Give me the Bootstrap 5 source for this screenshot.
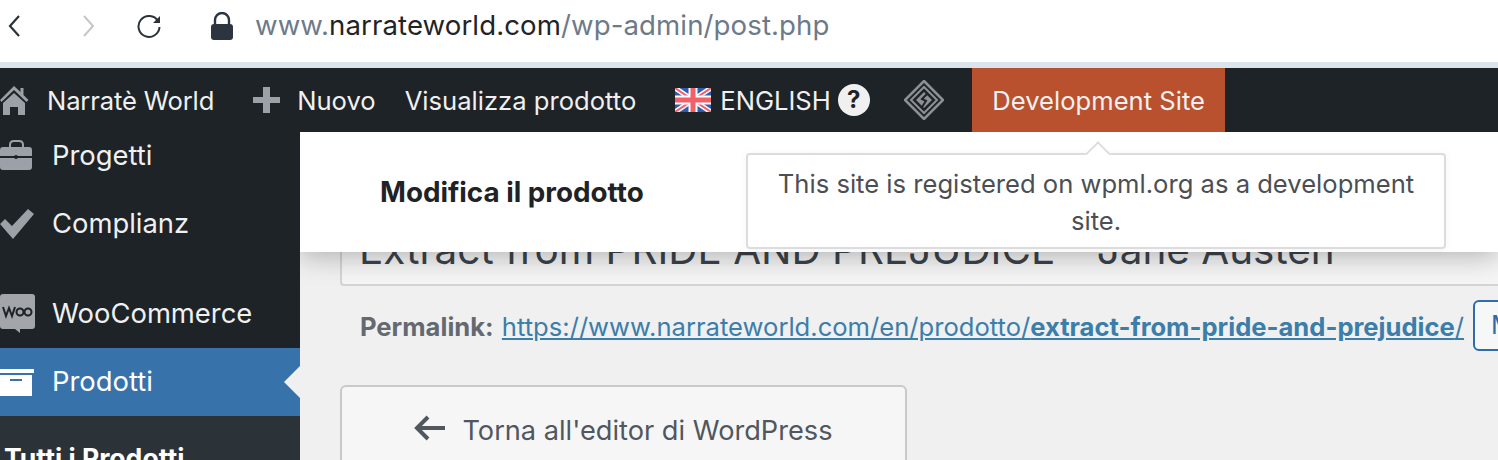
<!doctype html>
<html lang="it"><head><meta charset="utf-8"><title>Modifica il prodotto</title>
<link href="https://cdn.jsdelivr.net/npm/bootstrap@5.3.0/dist/css/bootstrap.min.css" rel="stylesheet">
<style>
html,body{height:460px;overflow:hidden;background:#f0f0f1}
body{font-family:Inter,"Liberation Sans",sans-serif;font-size:25.6px;position:relative}
.chrome{height:62px;background:#fff;padding-bottom:10px}
.urltext{font-size:27.6px;color:#6c7a89;line-height:1;letter-spacing:.1px}
.urltext b{font-weight:400;color:#1f2428}
.strip{height:6px;background:#dae4ec}
.adminbar{height:64px;background:#1d2327;color:#f0f0f1;white-space:nowrap}
.adminbar span.lbl{line-height:67px}
.adminbar span.sitename{letter-spacing:-.15px}
.devsite{background:#b9512e;height:64px;padding:0 20.5px;line-height:66px;color:#f0f0f1}
.qmark{width:32px;height:32px;margin-left:7px;border-radius:50%;background:#f0f0f1;color:#1d2327;font-weight:700;font-size:24px;line-height:32px;text-align:center}
.workarea{height:328px}
.sidemenu{width:300px;background:#1d2327;color:#f0f0f1;flex:none;position:relative;overflow:hidden;font-size:27.4px}
.menuitem{height:68px;flex:none;white-space:nowrap}
.menuitem svg{flex:none}
.menuitem .lbl{margin-left:52px}
.menuicon{position:absolute;left:0}
.firstitem{height:48px;margin-bottom:10px}
.gap22{height:22px;flex:none}
.activeitem{background:#3872ab;color:#fff;position:relative}
.activeitem::after{content:"";position:absolute;right:0;top:50%;margin-top:-16px;border:16px solid transparent;border-left:0;border-right-color:#f0f0f1}
.subitem{background:#2c3338;color:#fff;font-weight:700;flex:none;height:60px;padding:27px 0 0 4px;line-height:30px;font-size:26.6px}
.mainarea{flex:1;min-width:0;position:relative;overflow:hidden;background:#f0f0f1}
.editheader{height:120px;background:#fff;position:relative;z-index:2;box-shadow:0 4px 26px rgba(0,0,0,.28);padding-left:80px;line-height:120px;font-size:27.8px;font-weight:700;color:#1d2327}
.titlebox{margin:-34px -60px 0 40px;height:68px;border:2px solid #d3d4d6;border-radius:4px;background:#f5f5f6;font-size:40.45px;color:#3c434a;padding-left:17px;line-height:60px;white-space:nowrap;position:relative;z-index:1}
.permarow{margin:21px 0 0 60px;white-space:nowrap;height:38px;line-height:34px;color:#646970}
.permarow a{color:#3b7eaa;text-decoration:underline}
.permarow .plabel{font-weight:700;color:#646970;margin-right:1px}
.modbtn{display:inline-block;width:60px;height:51px;border:2px solid #2f6ca8;border-radius:6px;background:#f6f7f7;color:#2f6ca8;line-height:46px;padding-left:16px;vertical-align:middle;margin:-7px 0 0 9px}
.backbtn{margin:40px 0 0 40px;width:567px;height:120px;border:2px solid #c8c9cb;border-radius:6px;background:#f6f6f7;color:#50575e;padding-top:24px;font-size:27.2px}
.devpop{position:absolute;left:746px;top:153px;width:700px;height:96px;background:#fff;border:2px solid #dcdcde;border-radius:4px;z-index:5;color:#4b4f54;text-align:center;padding:11px 20px;line-height:36.5px;font-size:25.6px;box-shadow:0 1px 8px rgba(0,0,0,.05)}
.devpop::before{content:"";position:absolute;left:340px;top:-11px;width:20px;height:20px;background:#fff;border-left:2px solid #dcdcde;border-top:2px solid #dcdcde;transform:rotate(45deg) scale(.9);}
</style></head><body>
<div class="chrome d-flex align-items-center">
 <svg class="ms-2" width="14" height="24" viewBox="0 0 14 24" fill="none" stroke="#2b323a" stroke-width="2.2"><path d="M11 2 2 12l9 10"/></svg>
 <svg style="margin-left:59px" width="14" height="24" viewBox="0 0 14 24" fill="none" stroke="#c4c6c8" stroke-width="2"><path d="M3 2l9 10-9 10"/></svg>
 <svg style="margin-left:41px" width="26" height="26" viewBox="0 0 26 26" fill="none" stroke="#2b323a" stroke-width="2"><path d="M22 8A10.500 10.500 0 1 0 23.500 14"/><path d="M24 3v7h-7" fill="#2b323a" stroke="none"/></svg>
 <svg style="margin-left:48px" width="24" height="28" viewBox="0 0 24 28"><path d="M5 13V8a7 7 0 0 1 14 0v5" fill="none" stroke="#2c3440" stroke-width="2.400"/><rect x="1" y="12" width="22" height="16" rx="3" fill="#2c3440"/></svg>
 <div class="urltext" style="margin-left:21px">www.<b>narrateworld.com</b>/wp-admin/post.php</div>
</div>
<div class="strip"></div>
<div class="adminbar d-flex align-items-center">
 <svg width="29" height="32" viewBox="0 0 29 32"><path d="M14 2 0 16l1.500 2L14 6l12.500 12 2-2-5-5V4h-3v4z" fill="#9ca1a7"/><path d="M3 19 14 9l11 10v12h-7v-8h-8v8H3z" fill="#9ca1a7"/></svg>
 <span class="lbl sitename" style="margin-left:18px">Narratè World</span>
 <svg style="margin-left:39px" width="27" height="26" viewBox="0 0 27 26"><path d="M10 0h7v10h10v6H17v10h-7V16H0v-6h10z" fill="#9ca1a7"/></svg>
 <span class="lbl" style="margin-left:17px">Nuovo</span>
 <span class="lbl" style="margin-left:29px">Visualizza prodotto</span>
 <svg style="margin-left:39px" width="36" height="24" viewBox="0 0 36 24"><rect width="36" height="24" fill="#2d5cb0"/><path d="M0 0l36 24M36 0 0 24" stroke="#fff" stroke-width="5"/><path d="M0 0l36 24M36 0 0 24" stroke="#f4606a" stroke-width="2"/><path d="M18 0v24M0 12h36" stroke="#fff" stroke-width="9"/><path d="M18 0v24M0 12h36" stroke="#f4606a" stroke-width="5"/></svg>
 <span class="lbl" style="margin-left:9px">ENGLISH</span>
 <span class="qmark">?</span>
 <svg style="margin-left:34px" width="40" height="40" viewBox="0 0 40 40" fill="none" stroke="#8d9196"><path d="M20 1 39 20 20 39 1 20z" stroke-width="2.500"/><path d="M20 7 33 20 20 33 7 20z" stroke-width="2"/><path d="M20 12 28 20 20 28 12 20z" fill="#8d9196" stroke="none"/><path d="M23 14l-5 5 4 2-4 6" stroke="#1d2327" stroke-width="2"/></svg>
 <div class="devsite" style="margin-left:28px">Development Site</div>
</div>
<div class="workarea d-flex">
 <div class="sidemenu d-flex flex-column">
  <div class="menuitem firstitem d-flex align-items-center"><svg class="menuicon" width="33" height="32" viewBox="0 0 33 32"><path d="M10 7V5q0-4 4-4h5q4 0 4 4v2" fill="none" stroke="#9ca1a7" stroke-width="2"/><path d="M0 10q0-3 3-3h26q3 0 3 3v6H0zM0 18h32v9q0 3-3 3H3q-3 0-3-3z" fill="#9ca1a7"/><circle cx="16" cy="17" r="2" fill="#1d2327"/></svg><span class="lbl">Progetti</span></div>
  <div class="menuitem d-flex align-items-center"><svg class="menuicon" width="34" height="30" viewBox="0 0 34 30"><path d="M0 15l5-5 7 7L28 0l6 5-21 25z" fill="#9ca1a7"/></svg><span class="lbl">Complianz</span></div>
  <div class="gap22"></div>
  <div class="menuitem d-flex align-items-center"><svg class="menuicon" width="36" height="40" viewBox="0 0 36 40"><path d="M3 0h29q3 0 3 3v29q0 3-3 3H20v4l-5-4H3q-3 0-3-3V3q0-3 3-3z" fill="#a2a5a9"/><path d="M3 13l3 9 3-8 3 8 3-9" fill="none" stroke="#1d2327" stroke-width="2"/><circle cx="20" cy="18" r="3.500" fill="none" stroke="#1d2327" stroke-width="2"/><circle cx="28" cy="18" r="3.500" fill="none" stroke="#1d2327" stroke-width="2"/></svg><span class="lbl">WooCommerce</span></div>
  <div class="menuitem activeitem d-flex align-items-center"><svg class="menuicon" width="34" height="27" viewBox="0 0 34 27"><path d="M0 0h34v4H0zM0 6h32v21H0z" fill="#fff"/><path d="M10 10h12v2H10z" fill="#3872ab"/></svg><span class="lbl">Prodotti</span></div>
  <div class="subitem">Tutti i Prodotti</div>
 </div>
 <div class="mainarea">
  <div class="editheader">Modifica il prodotto</div>
  <div class="titlebox">Extract from PRIDE AND PREJUDICE - Jane Austen</div>
  <div class="permarow"><span class="plabel">Permalink:</span> <a href="#">https://www.narrateworld.com/en/prodotto/<b>extract-from-pride-and-prejudice</b>/</a><span class="modbtn">M</span></div>
  <div class="backbtn d-flex justify-content-center"><svg class="me-3 mt-1" width="32" height="26" viewBox="0 0 32 26" fill="none" stroke="#50575e" stroke-width="4"><path d="M31 13H4M14 2 3 13l11 11"/></svg><span>Torna all'editor di WordPress</span></div>
 </div>
</div>
<div class="devpop">This site is registered on wpml.org as a development site.</div>
<script src="https://cdn.jsdelivr.net/npm/bootstrap@5.3.0/dist/js/bootstrap.bundle.min.js"></script>
</body></html>
